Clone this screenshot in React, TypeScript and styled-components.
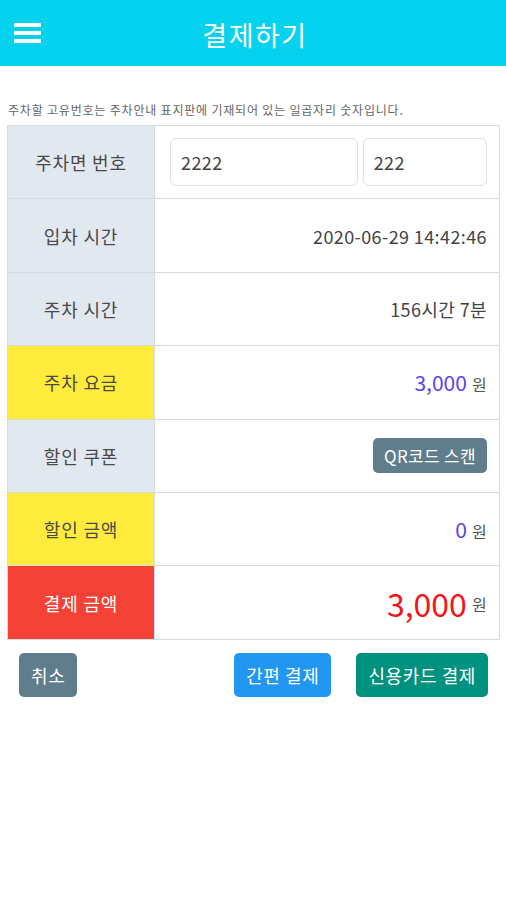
import React from "react";
import styled, { createGlobalStyle } from "styled-components";

const GlobalStyle = createGlobalStyle`
  body {
    margin: 0;
    background: #fff;
    font-family: "Noto Sans CJK KR", "Noto Sans", sans-serif;
  }
`;

const Header = styled.header`
  height: 66px;
  background: #05d2ee;
  display: flex;
  align-items: center;
`;

const MenuButton = styled.div`
  width: 27px;
  margin-left: 14px;
  display: flex;
  flex-direction: column;
  gap: 4px;

  > span {
    height: 4px;
    border-radius: 1px;
    background: #fff;
  }
`;

const Title = styled.h1`
  flex: 1;
  margin: 0 37px 0 0;
  text-align: center;
  color: #fff;
  font-size: 27px;
  font-weight: 400;
  letter-spacing: 1.5px;
  padding-top: 2px;
`;

const Content = styled.main`
  padding: 35px 6px 0 7px;
`;

const Notice = styled.p`
  margin: 0 0 7px 1px;
  font-size: 12px;
  letter-spacing: 0.8px;
  color: #666;
`;

const Table = styled.div`
  border: 1px solid #d5dbe3;
  border-bottom: none;
`;

const Row = styled.div`
  display: grid;
  grid-template-columns: 147px minmax(0, 1fr);
  height: 72.4px;
  border-bottom: 1px solid #d5dbe3;
`;

const Label = styled.div<{ $tone?: "yellow" | "red" }>`
  display: flex;
  align-items: center;
  justify-content: center;
  border-right: 1px solid #d5dbe3;
  font-size: 18px;
  letter-spacing: 0.8px;
  background: ${(p) =>
    p.$tone === "yellow" ? "#ffeb3b" : p.$tone === "red" ? "#f44336" : "#e2e8f0"};
  color: ${(p) => (p.$tone === "red" ? "#fff" : "#4a4a4a")};
`;

const Value = styled.div<{ $fill?: boolean }>`
  display: flex;
  align-items: center;
  justify-content: ${(p) => (p.$fill ? "stretch" : "flex-end")};
  gap: 5px;
  padding: 0 12px 0 15px;
  font-size: 18px;
  letter-spacing: 0.4px;
  color: #444;
`;

const Input = styled.input<{ $grow: number }>`
  flex: ${(p) => p.$grow} 1 0;
  width: 0;
  min-width: 0;
  height: 48px;
  box-sizing: border-box;
  border: 1px solid #dcdfe4;
  border-radius: 6px;
  padding: 0 10px;
  font-family: inherit;
  font-size: 18px;
  letter-spacing: 0.4px;
  color: #444;
  background: #fff;
`;

const Amount = styled.span<{ $big?: boolean }>`
  color: ${(p) => (p.$big ? "#f5141c" : "#5a45f0")};
  font-size: ${(p) => (p.$big ? "32px" : "21px")};
  letter-spacing: 0;
`;

const Won = styled.span`
  font-size: 16px;
  color: #555;
  padding-top: 3px;
`;

const Button = styled.button<{ $color: string }>`
  background: ${(p) => p.$color};
  color: #fff;
  border: none;
  border-radius: 5px;
  font-family: inherit;
  font-size: 18px;
  letter-spacing: 0.6px;
  height: 44px;
  padding: 0 12px;
`;

const QrButton = styled(Button)`
  height: 35px;
  padding: 0 11px;
  font-size: 17px;
  letter-spacing: 0.3px;
`;

const Actions = styled.div`
  display: flex;
  gap: 25px;
  padding: 13px 12px 0 12px;

  > :first-child {
    margin-right: auto;
  }
`;

export default function App() {
  return (
    <>
      <GlobalStyle />
      <Header>
        <MenuButton>
          <span />
          <span />
          <span />
        </MenuButton>
        <Title>결제하기</Title>
      </Header>
      <Content>
        <Notice>주차할 고유번호는 주차안내 표지판에 기재되어 있는 일곱자리 숫자입니다.</Notice>
        <Table>
          <Row>
            <Label>주차면 번호</Label>
            <Value $fill>
              <Input $grow={165} defaultValue="2222" />
              <Input $grow={102} defaultValue="222" />
            </Value>
          </Row>
          <Row>
            <Label>입차 시간</Label>
            <Value>2020-06-29 14:42:46</Value>
          </Row>
          <Row>
            <Label>주차 시간</Label>
            <Value>156시간 7분</Value>
          </Row>
          <Row>
            <Label $tone="yellow">주차 요금</Label>
            <Value>
              <Amount>3,000</Amount>
              <Won>원</Won>
            </Value>
          </Row>
          <Row>
            <Label>할인 쿠폰</Label>
            <Value>
              <QrButton $color="#5f7d8b">QR코드 스캔</QrButton>
            </Value>
          </Row>
          <Row>
            <Label $tone="yellow">할인 금액</Label>
            <Value>
              <Amount>0</Amount>
              <Won>원</Won>
            </Value>
          </Row>
          <Row>
            <Label $tone="red">결제 금액</Label>
            <Value>
              <Amount $big>3,000</Amount>
              <Won>원</Won>
            </Value>
          </Row>
        </Table>
        <Actions>
          <Button $color="#5f7d8b">취소</Button>
          <Button $color="#2196f3">간편 결제</Button>
          <Button $color="#00917f">신용카드 결제</Button>
        </Actions>
      </Content>
    </>
  );
}
